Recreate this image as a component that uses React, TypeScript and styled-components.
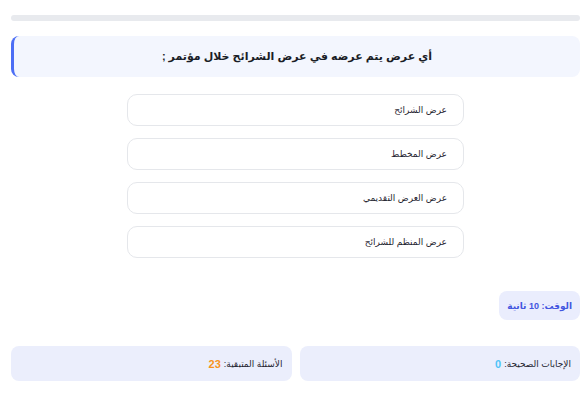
import React from 'react';
import styled, {createGlobalStyle} from 'styled-components';

const GlobalStyle = createGlobalStyle`
  body {
    margin: 0;
    background: #ffffff;
    font-family: "Liberation Sans", "DejaVu Sans", Arial, sans-serif;
    color: #1f2430;
  }
`;

const options = [
    'عرض الشرائح',
    'عرض المخطط',
    'عرض العرض التقديمي',
    'عرض المنظم للشرائح',
];

const App: React.FC = () => {
    return (
        <>
            <GlobalStyle/>
            <StyledPage dir="rtl">
                <StyledProgress/>
                <StyledQuestion>أي عرض يتم عرضه في عرض الشرائح خلال مؤتمر ;</StyledQuestion>
                <StyledOptions>
                    {options.map((opt) => (
                        <StyledOption key={opt}>{opt}</StyledOption>
                    ))}
                </StyledOptions>
                <StyledTimerRow>
                    <StyledTimer>الوقت: 10 ثانية</StyledTimer>
                </StyledTimerRow>
                <StyledStats>
                    <StyledStat>
                        الإجابات الصحيحة: <StyledValue color="#4fc3f7">0</StyledValue>
                    </StyledStat>
                    <StyledStat>
                        الأسئلة المتبقية: <StyledValue color="#f7941d">23</StyledValue>
                    </StyledStat>
                </StyledStats>
            </StyledPage>
        </>
    );
};

const StyledPage = styled.div`
  padding: 15px 8px 0 11px;
  display: flex;
  flex-direction: column;
`;
const StyledProgress = styled.div`
  height: 6px;
  border-radius: 3px;
  background: #e8eaee;
`;
const StyledQuestion = styled.div`
  margin-top: 15px;
  height: 41px;
  display: flex;
  align-items: center;
  justify-content: center;
  background: #f3f6fe;
  border-radius: 8px;
  border-left: 3px solid #4c6ef5;
  font-size: 11px;
  font-weight: bold;
  color: #1a1d26;
`;
const StyledOptions = styled.div`
  margin: 17px auto 0;
  width: 337px;
  display: flex;
  flex-direction: column;
  gap: 12px;
`;
const StyledOption = styled.div`
  height: 32px;
  box-sizing: border-box;
  border: 1px solid #e5e7eb;
  border-radius: 10px;
  display: flex;
  align-items: center;
  padding: 0 16px;
  font-size: 9px;
  color: #1f2430;
`;
const StyledTimerRow = styled.div`
  margin-top: 33px;
  display: flex;
`;
const StyledTimer = styled.div`
  height: 29px;
  padding: 0 8px;
  display: flex;
  align-items: center;
  background: #eaedfd;
  border-radius: 8px;
  font-size: 9px;
  font-weight: bold;
  color: #4356e0;
`;
const StyledStats = styled.div`
  margin-top: 26px;
  display: grid;
  grid-template-columns: 1fr 1fr;
  gap: 8px;
`;
const StyledStat = styled.div`
  height: 35px;
  display: flex;
  align-items: center;
  gap: 3px;
  padding: 0 9px;
  background: #ebeefc;
  border-radius: 8px;
  font-size: 9px;
  color: #1f2430;
`;
const StyledValue = styled.span<{color: string}>`
  color: ${(p) => p.color};
  font-weight: bold;
  font-size: 11px;
`;

export default App;
